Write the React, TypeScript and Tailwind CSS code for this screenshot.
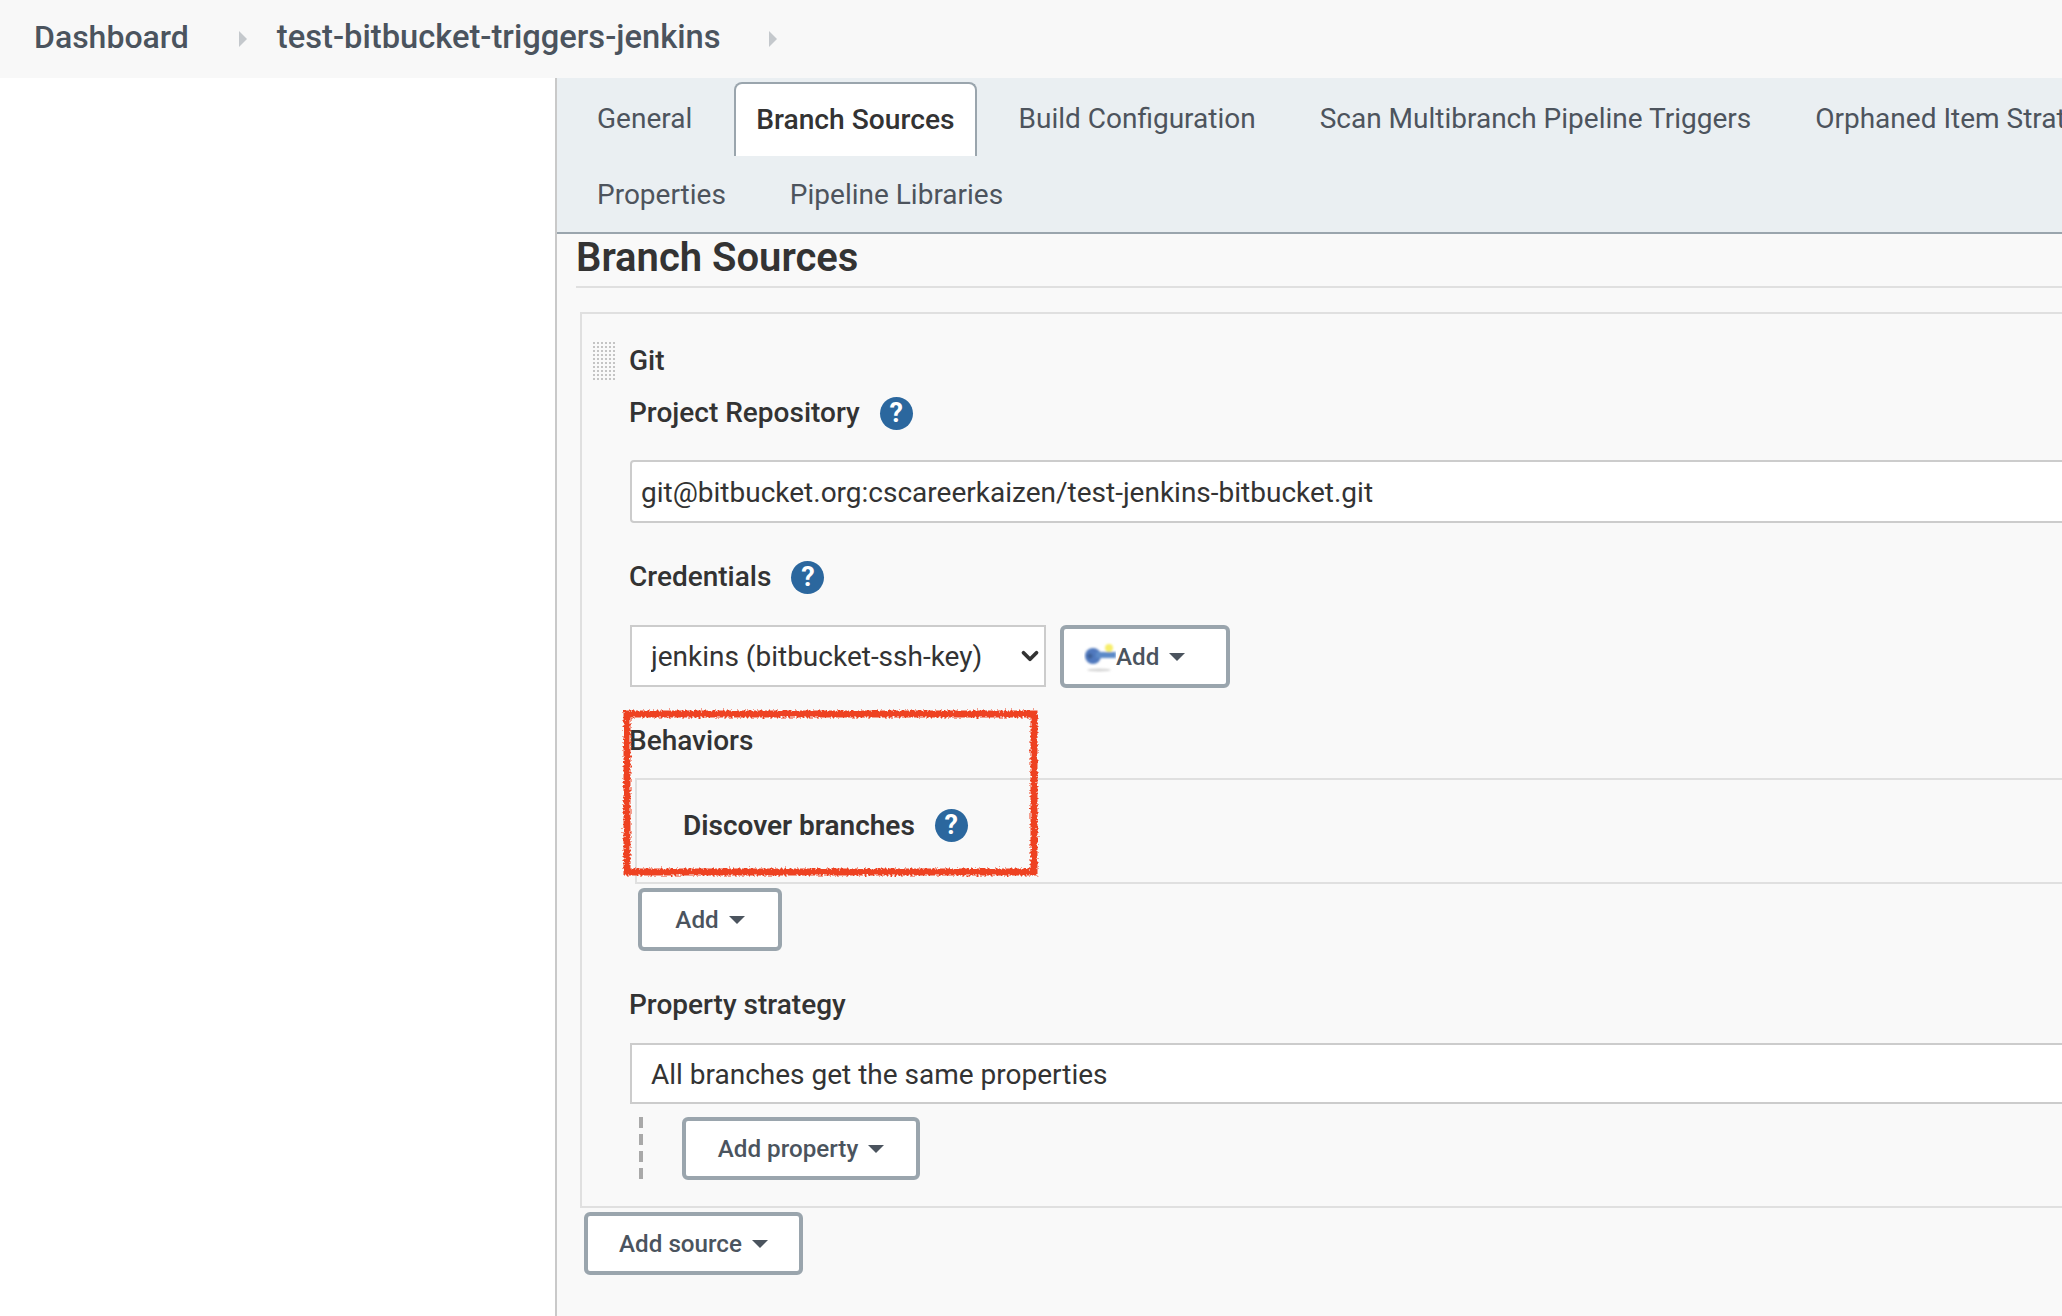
import { ChevronDown } from 'lucide-react'

const font = { fontFamily: 'Roboto, sans-serif' }

function Caret() {
  return <span className="ml-[10px] inline-block h-0 w-0 border-x-[8px] border-t-[8px] border-x-transparent border-t-[#4b545e]" />
}

function Help({ className = '' }: { className?: string }) {
  return (
    <span className={`flex h-[33px] w-[33px] shrink-0 items-center justify-center rounded-full bg-[#2b679e] text-[27px] font-bold leading-none text-white ${className}`}>
      ?
    </span>
  )
}

function AddButton({ label, className = '', icon = false }: { label: string; className?: string; icon?: boolean }) {
  return (
    <button className={`flex h-[63px] items-center rounded-[6px] border-[4px] border-[#9aa5ad] bg-white pt-[1px] text-[24.2px] font-medium text-[#4b545e] ${className}`}>
      {icon && <KeyIcon />}
      {label}
      <Caret />
    </button>
  )
}

function KeyIcon() {
  return (
    <svg width="32" height="32" viewBox="0 0 32 32" className="shrink-0">
      <defs>
        <filter id="soft">
          <feGaussianBlur stdDeviation="0.8" />
        </filter>
      </defs>
      <g filter="url(#soft)">
        <ellipse cx="15" cy="29" rx="12" ry="1.5" fill="#d4d4d4" />
        <circle cx="25" cy="7" r="4" fill="#f7ee6a" />
        <circle cx="9" cy="15" r="8" fill="#4f78bd" />
        <circle cx="6" cy="15" r="2.5" fill="#3d5f96" />
        <rect x="12" y="11" width="20" height="6" fill="#5b8ac8" />
      </g>
    </svg>
  )
}

function Tab({ label, active = false, className = '' }: { label: string; active?: boolean; className?: string }) {
  if (active) {
    return (
      <div className="mt-[4px] flex h-[74px] items-center whitespace-nowrap rounded-t-[8px] border-x-2 border-t-2 border-[#9aa5ad] bg-white px-[20px] text-[28.2px] font-medium text-[#333]">
        {label}
      </div>
    )
  }
  return <div className={`flex h-[78px] items-center whitespace-nowrap px-[22px] text-[28px] text-[#4d545d] ${className}`}>{label}</div>
}

function RedMark() {
  return (
    <svg width="424" height="172" viewBox="0 0 424 172" className="pointer-events-none absolute left-[-11px] top-[-17px]">
      <defs>
        <filter id="rough" x="-5%" y="-5%" width="110%" height="110%">
          <feTurbulence type="fractalNoise" baseFrequency="0.5" numOctaves="2" seed="4" />
          <feDisplacementMap in="SourceGraphic" scale="6" />
        </filter>
      </defs>
      <rect x="8" y="6" width="407" height="158" fill="none" stroke="#ee4324" strokeWidth="7" filter="url(#rough)" />
    </svg>
  )
}

export default function App() {
  return (
    <div style={font} className="h-[1316px] w-[2062px] overflow-hidden bg-white">
      <header className="flex h-[78px] items-center bg-[#f8f8f8] pl-[34px] font-medium text-[#4b545e]">
        <span className="pb-[4px] text-[32px]">Dashboard</span>
        <span className="ml-[50px] h-0 w-0 border-y-[8px] border-l-[8px] border-y-transparent border-l-[#c4c8cc]" />
        <span className="ml-[30px] pb-[2px] text-[32.7px]">test-bitbucket-triggers-jenkins</span>
        <span className="ml-[48px] h-0 w-0 border-y-[8px] border-l-[8px] border-y-transparent border-l-[#c4c8cc]" />
      </header>

      <div className="flex">
        <aside className="h-[1238px] w-[555px] shrink-0 bg-white" />
        <main className="h-[1238px] w-[1800px] shrink-0 border-l-2 border-[#c9c9c9] bg-[#f9f9f9]">
          <div className="h-[156px] border-b-2 border-[#9aa5ad] bg-[#eaeff2] pl-[18px]">
            <div className="flex h-[78px] gap-[20px]">
              <Tab label="General" className="pt-[4px]" />
              <Tab label="Branch Sources" active />
              <Tab label="Build Configuration" className="pt-[4px]" />
              <Tab label="Scan Multibranch Pipeline Triggers" className="pt-[4px]" />
              <Tab label="Orphaned Item Strategy" className="pt-[4px]" />
            </div>
            <div className="flex h-[76px] gap-[20px]">
              <Tab label="Properties" />
              <Tab label="Pipeline Libraries" />
            </div>
          </div>

          <div className="pl-[19px]">
            <h2 className="flex h-[54px] items-center border-b-2 border-[#e0e0e0] pb-[4px] text-[40px] font-semibold text-[#333]">Branch Sources</h2>

            <section className="relative ml-[4px] mt-[24px] h-[896px] border-2 border-[#e0e0e0] pl-[48px] text-[28px] font-medium text-[#333]">
              <div className="absolute left-[10px] top-[27px] h-[41px] w-[24px] bg-[radial-gradient(#c4c4c4_1px,transparent_1.3px)] bg-[length:4px_4px]" />
              <div className="-ml-px mt-[13px] flex h-[44px] items-center pt-[24px]">Git</div>
              <div className="-ml-px mt-[26px] flex h-[32px] items-center gap-[20px]">
                Project Repository
                <Help />
              </div>
              <input
                readOnly
                value="git@bitbucket.org:cscareerkaizen/test-jenkins-bitbucket.git"
                className="mt-[31px] block h-[63px] w-[1500px] rounded-[4px] border-2 border-[#ccc] bg-white px-[9px] pt-[2px] text-[28px] font-normal text-[#333]"
              />
              <div className="-ml-px mt-[38px] flex h-[32px] items-center gap-[20px]">
                Credentials
                <Help />
              </div>
              <div className="mt-[32px] flex gap-[14px]">
                <div className="relative w-[416px]">
                  <select className="block h-[62px] w-full appearance-none border-2 border-[#ccc] bg-white pl-[19px] pt-[2px] text-[28px] font-normal text-[#333]">
                    <option>jenkins (bitbucket-ssh-key)</option>
                  </select>
                  <ChevronDown size={26} strokeWidth={3.5} className="absolute right-[3px] top-[18px] text-[#333]" />
                </div>
                <AddButton label="Add" icon className="w-[170px] pl-[20px]" />
              </div>

              <div className="relative">
                <RedMark />
                <div className="-ml-px mt-[37px] flex h-[32px] items-center">Behaviors</div>
                <div className="ml-[5px] mt-[21px] flex h-[106px] items-center gap-[20px] border-y-2 border-l-2 border-[#e0e0e0] pb-[11px] pl-[46px] font-semibold">
                  Discover branches
                  <Help />
                </div>
              </div>

              <AddButton label="Add" className="ml-[8px] mt-[4px] w-[144px] justify-center" />
              <div className="-ml-px mt-[38px] flex h-[32px] items-center">Property strategy</div>
              <select className="mt-[22px] block h-[61px] w-[1500px] appearance-none border-2 border-[#ccc] bg-white pl-[19px] pt-[2px] text-[28px] font-normal text-[#333]">
                <option>All branches get the same properties</option>
              </select>
              <div className="mt-[13px] flex">
                <div className="ml-[9px] h-[64px] w-[4px] bg-[repeating-linear-gradient(to_bottom,#a9a9a9_0,#a9a9a9_11px,transparent_11px,transparent_17px)]" />
                <AddButton label="Add property" className="ml-[39px] w-[238px] justify-center" />
              </div>
            </section>

            <AddButton label="Add source" className="ml-[8px] mt-[4px] w-[219px] justify-center" />
          </div>
        </main>
      </div>
    </div>
  )
}
